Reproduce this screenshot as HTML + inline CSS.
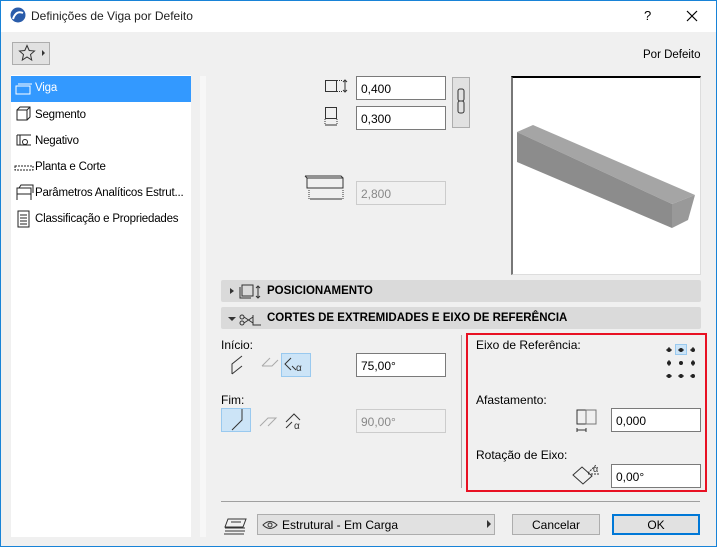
<!DOCTYPE html><html><head><style>
*{box-sizing:border-box;margin:0;padding:0}
body{width:717px;height:547px;background:#f0f0f0;font-family:"Liberation Sans",sans-serif;font-size:12px;color:#000;position:relative;overflow:hidden}
.a{position:absolute}
.win{left:0;top:0;width:717px;height:547px;border:1px solid #1883d7}
.inp{position:absolute;background:#fff;border:1px solid #7a7a7a;height:24px;width:90px;padding:5px 0 0 4px;font-size:12px}
.dis{background:#f0f0f0;border-color:#ccc;color:#888}
.hdr{position:absolute;left:221px;width:480px;height:22px;background:#dadada;border-radius:2px;font-weight:bold;font-size:11.5px;padding:5px 0 0 46px}
.li{position:absolute;left:35px;font-size:11.5px;letter-spacing:-0.2px}
.btn{position:absolute;background:#e1e1e1;border:1px solid #adadad;text-align:center;padding-top:3px}
</style></head><body>
<div class="a win"></div>
<div class="a" style="left:1px;top:1px;width:715px;height:31px;background:#fff"></div>
<svg class="a" style="left:10px;top:7px" width="16" height="16"><circle cx="8" cy="8" r="7.5" fill="#2a5caa"/><path d="M3 12 Q6 3 13 6" stroke="#fff" stroke-width="2" fill="none"/></svg>
<div class="a" style="left:31px;top:9px;font-size:12px;color:#222">Definições de Viga por Defeito</div>
<div class="a" style="left:644px;top:8px;font-size:13px">?</div>
<svg class="a" style="left:686px;top:10px" width="12" height="12"><path d="M1 1L11 11M11 1L1 11" stroke="#000" stroke-width="1.2"/></svg>
<div class="a" style="left:12px;top:42px;width:38px;height:23px;background:#e1e1e1;border:1px solid #adadad"></div>
<svg class="a" style="left:18px;top:44px" width="30" height="18"><path d="M9 1.5L11.2 6.5 16.5 7 12.5 10.5 13.7 16 9 13 4.3 16 5.5 10.5 1.5 7 6.8 6.5Z" fill="none" stroke="#333"/><path d="M24 6L27 9 24 12Z" fill="#333"/></svg>
<div class="a" style="left:643px;top:49px;font-size:11.5px">Por Defeito</div>
<div class="a" style="left:11px;top:75px;width:180px;height:462px;background:#fff"></div>
<div class="a" style="left:200px;top:76px;width:6px;height:461px;background:#f7f7f7"></div>
<div class="a" style="left:11px;top:76px;width:180px;height:26px;background:#3399ff"></div>
<div class="li" style="top:82px;color:#fff">Viga</div>
<div class="li" style="top:109px">Segmento</div>
<div class="li" style="top:135px">Negativo</div>
<div class="li" style="top:161px">Planta e Corte</div>
<div class="li" style="top:187px">Parâmetros Analíticos Estrut...</div>
<div class="li" style="top:213px">Classificação e Propriedades</div>
<svg class="a" style="left:14px;top:80px" width="20" height="160" fill="none" stroke="#222">
<path d="M2 6h14v8H2z M4 4h14" stroke="#fff"/>
<path d="M3 30h10v10H3z M3 30l3-3h10v10l-3 3 M13 30l3-3"/>
<path d="M3 55h14M3 55v10h14 M6 55v10"/><circle cx="11" cy="62" r="2.5"/>
<path d="M1 86h18v4H1z" stroke-dasharray="2 1"/>
<path d="M3 108h14v6H3z M3 114v6 M17 114v6 M5 108l2-3h12v8"/>
<path d="M4 131h11v16H4z M6 135h7M6 138h7M6 141h7M6 144h7"/>
</svg>
<div class="inp" style="left:356px;top:76px">0,400</div>
<div class="inp" style="left:356px;top:106px">0,300</div>
<div class="a" style="left:452px;top:77px;width:18px;height:51px;background:#e1e1e1;border:1px solid #adadad"></div>
<svg class="a" style="left:455px;top:88px" width="12" height="28" fill="none" stroke="#333"><rect x="3" y="1" width="6" height="12" rx="2"/><rect x="3" y="13" width="6" height="12" rx="2"/></svg>
<svg class="a" style="left:320px;top:74px" width="32" height="60" fill="none" stroke="#333"><rect x="5.5" y="6.5" width="11" height="11"/><path d="M17 6.5h5M17 17.5h5" stroke-dasharray="1 1"/><path d="M25 6v12M23 8l2-2 2 2M23 16l2 2 2-2"/><rect x="5.5" y="33.5" width="11" height="11"/><path d="M5 45v6M17 45v6" stroke-dasharray="1 1"/><path d="M5 51h12"/></svg>
<svg class="a" style="left:304px;top:174px" width="46" height="32" fill="none" stroke="#333"><path d="M3 4h36v10H3z M1 2l2 2M1 2h36l2 2"/><path d="M5 16v10M39 16v10" stroke-dasharray="1 1"/><path d="M6 25h32"/></svg>
<div class="inp dis" style="left:356px;top:181px">2,800</div>
<div class="a" style="left:511px;top:76px;width:190px;height:199px;background:#fff;border-top:2px solid #000;border-left:2px solid #777;border-right:1px solid #ddd;border-bottom:1px solid #ddd"></div>
<svg class="a" style="left:511px;top:76px" width="190" height="199"><path d="M6 56L22 49 184 119 161 128Z" fill="#a5a5a5"/><path d="M6 56L161 128 161 152 6 86Z" fill="#8c8c8c"/><path d="M161 128L184 119 177 144 161 152Z" fill="#999"/></svg>
<div class="hdr" style="top:280px">POSICIONAMENTO</div>
<div class="hdr" style="top:307px">CORTES DE EXTREMIDADES E EIXO DE REFERÊNCIA</div>
<svg class="a" style="left:226px;top:282px" width="40" height="46" fill="none" stroke="#333"><path d="M4 6l4 3-4 3Z" fill="#333" stroke="none"/><rect x="16" y="3" width="11" height="11"/><path d="M14 5v11h11 M32 4v12M30 6l2-2 2 2M30 14l2 2 2-2"/><path d="M2 35l4 4 4-4Z" fill="#333" stroke="none"/><circle cx="16" cy="35" r="2"/><circle cx="16" cy="41" r="2"/><path d="M18 35l9 6M18 41l9-6M27 33v10h8"/></svg>
<div class="a" style="left:221px;top:338px">Início:</div>
<div class="a" style="left:221px;top:393px">Fim:</div>
<div class="a" style="left:281px;top:353px;width:30px;height:24px;background:#cce4f7;border:1px solid #99c9ef"></div>
<div class="a" style="left:221px;top:408px;width:30px;height:24px;background:#cce4f7;border:1px solid #99c9ef"></div>
<svg class="a" style="left:226px;top:352px" width="90" height="82" fill="none" stroke="#333"><path d="M6 22V12l10-8 M6 22l10-8"/><path d="M36 14l8-8M36 14h10l6-6" stroke="#aaa"/><path d="M65 6l-6 6 6 6M66 14l4 4"/><text x="70" y="19" font-size="10" fill="#333" stroke="none">α</text><path d="M6 78l10-10V57 M6 78l10-10" /><path d="M34 74l8-8h8l-8 8" stroke="#aaa"/><path d="M60 70l8-8 6 6M60 76l6-6"/><text x="68" y="77" font-size="10" fill="#333" stroke="none">α</text></svg>
<div class="inp" style="left:356px;top:353px">75,00°</div>
<div class="inp dis" style="left:356px;top:409px">90,00°</div>
<div class="a" style="left:461px;top:335px;width:1px;height:153px;background:#aaa"></div>
<div class="a" style="left:466px;top:333px;width:241px;height:159px;border:2px solid #e81123"></div>
<div class="a" style="left:476px;top:338px">Eixo de Referência:</div>
<div class="a" style="left:476px;top:393px">Afastamento:</div>
<div class="a" style="left:476px;top:448px">Rotação de Eixo:</div>
<div class="a" style="left:675px;top:344px;width:12px;height:11px;background:#cce4f7;border:1px solid #99c9ef"></div>
<svg class="a" style="left:665px;top:344px" width="32" height="36" fill="#222" stroke="#222"><circle cx="4" cy="6" r="1.5"/><circle cx="16" cy="6" r="1.5"/><circle cx="28" cy="6" r="1.5"/><circle cx="4" cy="19" r="1.5"/><circle cx="16" cy="19" r="1.5"/><circle cx="28" cy="19" r="1.5"/><circle cx="4" cy="32" r="1.5"/><circle cx="16" cy="32" r="1.5"/><circle cx="28" cy="32" r="1.5"/><path d="M1 6h6M13 6h6M25 6h4M1 32h6M13 32h6M25 32h4M4 16v6M28 16v6M4 3v3M28 3v3" fill="none"/></svg>
<svg class="a" style="left:574px;top:406px" width="28" height="28" fill="none" stroke="#333"><rect x="3" y="4" width="9" height="14"/><rect x="12" y="4" width="10" height="14" stroke="#777"/><path d="M3 24h9M3 22v4M12 22v4"/></svg>
<div class="inp" style="left:611px;top:408px">0,000</div>
<svg class="a" style="left:570px;top:460px" width="34" height="26" fill="none" stroke="#333"><path d="M3 15l9-8 10 9-9 8Z"/><path d="M18 13l8-8M18 14h12" stroke-dasharray="2 1"/><text x="23" y="12" font-size="9" fill="#333" stroke="none">α</text></svg>
<div class="inp" style="left:611px;top:464px">0,00°</div>
<div class="a" style="left:221px;top:501px;width:479px;height:1px;background:#a0a0a0"></div>
<svg class="a" style="left:222px;top:516px" width="28" height="20" fill="none" stroke="#333"><path d="M3 12h20M3 15h20M2 18h20M6 3h18l-3 8H3Z"/><path d="M9 6h10" /></svg>
<div class="btn" style="left:257px;top:514px;width:238px;height:21px;text-align:left;padding-left:24px">Estrutural - Em Carga</div>
<svg class="a" style="left:262px;top:519px" width="18" height="12" fill="none" stroke="#333"><path d="M1 6Q8 -1 15 6Q8 13 1 6Z"/><circle cx="8" cy="6" r="2"/></svg>
<svg class="a" style="left:485px;top:519px" width="8" height="10"><path d="M2 1L6 5 2 9Z" fill="#333"/></svg>
<div class="btn" style="left:512px;top:514px;width:88px;height:21px">Cancelar</div>
<div class="btn" style="left:612px;top:514px;width:88px;height:21px;border:2px solid #0078d7;padding-top:2px">OK</div>
</body></html>
